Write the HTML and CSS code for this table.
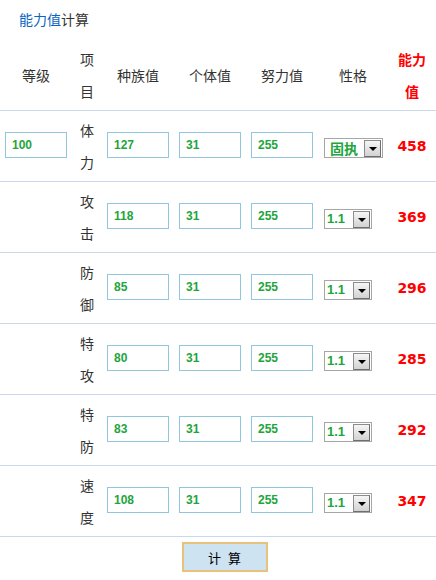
FILE: index.html
```html
<!DOCTYPE html>
<html lang="zh">
<head>
<meta charset="utf-8">
<title>能力值计算</title>
<link rel="stylesheet" href="styles.css">
</head>
<body>
<div class="title"><span class="hl">能力值</span>计算</div>
<table class="calc">
  <colgroup>
    <col class="c-lv"><col class="c-item"><col class="c-in"><col class="c-in"><col class="c-in"><col class="c-nat"><col class="c-res">
  </colgroup>
  <thead>
    <tr>
      <th>等级</th><th>项目</th><th>种族值</th><th>个体值</th><th>努力值</th><th>性格</th><th class="red">能力值</th>
    </tr>
  </thead>
  <tbody>
    <tr>
      <td><input class="num" value="100"></td><td class="item">体力</td>
      <td><input class="num" value="127"></td><td><input class="num" value="31"></td><td><input class="num" value="255"></td>
      <td class="nat"><span class="sel"><span class="sel-t big">固执</span><span class="arr"></span></span></td><td class="res">458</td>
    </tr>
    <tr>
      <td></td><td class="item">攻击</td>
      <td><input class="num" value="118"></td><td><input class="num" value="31"></td><td><input class="num" value="255"></td>
      <td class="nat"><span class="sel"><span class="sel-t">1.1</span><span class="arr"></span></span></td><td class="res">369</td>
    </tr>
    <tr>
      <td></td><td class="item">防御</td>
      <td><input class="num" value="85"></td><td><input class="num" value="31"></td><td><input class="num" value="255"></td>
      <td class="nat"><span class="sel"><span class="sel-t">1.1</span><span class="arr"></span></span></td><td class="res">296</td>
    </tr>
    <tr>
      <td></td><td class="item">特攻</td>
      <td><input class="num" value="80"></td><td><input class="num" value="31"></td><td><input class="num" value="255"></td>
      <td class="nat"><span class="sel"><span class="sel-t">1.1</span><span class="arr"></span></span></td><td class="res">285</td>
    </tr>
    <tr>
      <td></td><td class="item">特防</td>
      <td><input class="num" value="83"></td><td><input class="num" value="31"></td><td><input class="num" value="255"></td>
      <td class="nat"><span class="sel"><span class="sel-t">1.1</span><span class="arr"></span></span></td><td class="res">292</td>
    </tr>
    <tr>
      <td></td><td class="item">速度</td>
      <td><input class="num" value="108"></td><td><input class="num" value="31"></td><td><input class="num" value="255"></td>
      <td class="nat"><span class="sel"><span class="sel-t">1.1</span><span class="arr"></span></span></td><td class="res">347</td>
    </tr>
  </tbody>
</table>
<div class="actions"><button class="btn"><span>计</span><span>算</span></button></div>
</body>
</html>
```
FILE: styles.css
```css
html, body {
  margin: 0;
  padding: 0;
  background: #fff;
}
body {
  font-family: "Noto Sans CJK SC", "DejaVu Sans", sans-serif;
  font-size: 14px;
  color: #333;
  width: 436px;
}
.title {
  padding: 9px 0 0 19px;
  height: 31px;
  line-height: 20px;
  font-size: 14px;
  color: #333;
}
.title .hl { color: #0a66c2; }
.calc {
  width: 436px;
  table-layout: fixed;
  border-collapse: collapse;
}
.c-lv { width: 72px; }
.c-item { width: 30px; }
.c-in { width: 72px; }
.c-nat { width: 70px; }
.c-res { width: 48px; }
.calc th, .calc td {
  padding: 3px 5px;
  line-height: 32px;
  text-align: center;
  vertical-align: middle;
  border-bottom: 1px solid #c8d9ea;
  font-weight: normal;
  font-size: 14px;
  color: #333;
}
.calc th.red {
  color: #ff0000;
  font-weight: bold;
}
.calc td.item { padding-left: 3px; padding-right: 3px; }
.calc td.nat { text-align: left; padding-left: 6px; padding-right: 0; }
.num {
  box-sizing: border-box;
  width: 62px;
  height: 26px;
  margin: 0 0 5px 0;
  padding: 0 0 0 6px;
  border: 1px solid #91c6df;
  outline: none;
  font-family: "Liberation Sans", Arial, sans-serif;
  font-weight: bold;
  font-size: 12px;
  color: #1ea53c;
  background: #fff;
  vertical-align: middle;
}
.sel {
  display: inline-flex;
  align-items: center;
  height: 20px;
  box-sizing: border-box;
  border: 1px solid #a6a6a6;
  background: #fff;
  vertical-align: middle;
  padding: 0 1px 0 2px;
}
.sel-t {
  font-family: "Liberation Sans", Arial, sans-serif;
  font-weight: bold;
  font-size: 13px;
  line-height: 18px;
  color: #1ea53c;
  padding-right: 8px;
}
.sel-t.big {
  font-family: "Noto Sans CJK SC", sans-serif;
  font-size: 14px;
  padding-left: 3px;
  padding-right: 6px;
}
.arr {
  box-sizing: border-box;
  width: 17px;
  height: 17px;
  border: 1px solid #8c8c8c;
  border-right-color: #6e6e6e;
  border-bottom-color: #6e6e6e;
  background: linear-gradient(#f6f6f6, #d2d2d2);
  display: flex;
  align-items: center;
  justify-content: center;
}
.arr::after {
  content: "";
  width: 0;
  height: 0;
  border-left: 4px solid transparent;
  border-right: 4px solid transparent;
  border-top: 4px solid #000;
  margin-top: 1px;
}
.calc td.res {
  font-family: "DejaVu Sans", Verdana, sans-serif;
  font-weight: bold;
  font-size: 14px;
  color: #ff0000;
}
.actions {
  display: flex;
  justify-content: center;
  padding: 5px 0 0 13px;
}
.btn {
  width: 86px;
  height: 30px;
  box-sizing: border-box;
  border: 2px solid #e8c27a;
  background: #cde3f2;
  font-family: "Noto Sans CJK SC", sans-serif;
  font-size: 13px;
  color: #000;
  padding: 0;
  display: inline-flex;
  align-items: center;
  justify-content: center;
  gap: 7px;
}
```
